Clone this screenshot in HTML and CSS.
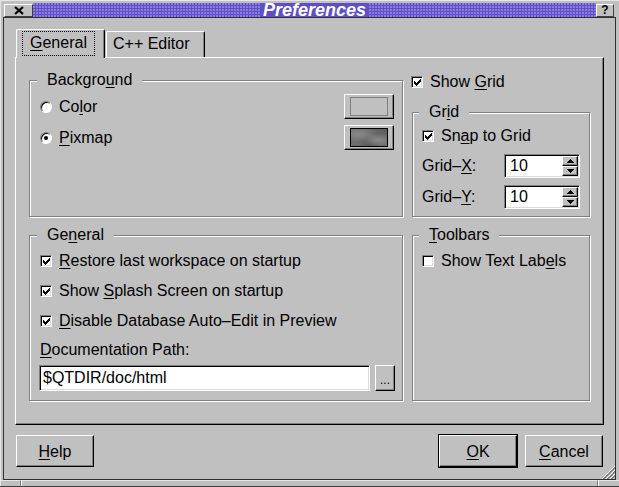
FILE: index.html
```html
<!DOCTYPE html>
<html>
<head>
<meta charset="utf-8">
<title>Preferences</title>
<link rel="stylesheet" href="styles.css">
</head>
<body>
<div class="window">
  <div class="titlebar">
    <div class="tb-btn tb-close">
      <svg width="10" height="9" viewBox="0 0 10 9"><path d="M1 1 L9 8 M9 1 L1 8" stroke="#000" stroke-width="2.3"/></svg>
    </div>
    <div class="tb-title"><span class="tb-text">Preferences</span></div>
    <div class="tb-btn tb-help">?</div>
  </div>

  <div class="client">
    <div class="tabs">
      <div class="tab tab-active"><span class="focus"><u>G</u>eneral</span></div>
      <div class="tab tab-normal">C++ Editor</div>
    </div>

    <div class="pane">
      <div class="group g-bg">
        <div class="group-title">Backgro<u>u</u>nd</div>
        <div class="bg-body">
          <div class="bg-radios">
            <div class="opt"><span class="radio"></span><span>Co<u>l</u>or</span></div>
            <div class="opt"><span class="radio on"></span><span><u>P</u>ixmap</span></div>
          </div>
          <div class="bg-btns">
            <div class="btn swatch"><span class="sw sw-color"></span></div>
            <div class="btn swatch"><span class="sw sw-pix"></span></div>
          </div>
        </div>
      </div>

      <div class="col-right">
        <div class="opt show-grid"><span class="cb"><svg width="10" height="10" viewBox="0 0 10 10"><path d="M2 4h1v3H2zM3 5h1v3H3zM4 6h1v3H4zM5 5h1v3H5zM6 4h1v3H6zM7 3h1v3H7zM8 2h1v3H8z" fill="#000"/></svg></span><span>Show <u>G</u>rid</span></div>
        <div class="group g-grid">
          <div class="group-title">Gr<u>i</u>d</div>
          <div class="opt snap"><span class="cb"><svg width="10" height="10" viewBox="0 0 10 10"><path d="M2 4h1v3H2zM3 5h1v3H3zM4 6h1v3H4zM5 5h1v3H5zM6 4h1v3H6zM7 3h1v3H7zM8 2h1v3H8z" fill="#000"/></svg></span><span>Sn<u>a</u>p to Grid</span></div>
          <div class="spin-row first">
            <span>Grid–<u>X</u>:</span>
            <div class="spin">
              <span class="spin-val">10</span>
              <div class="spin-btns">
                <div class="sb"><svg width="7" height="4" viewBox="0 0 7 4"><path d="M3 0h1v1H3zM2 1h3v1H2zM1 2h5v1H1zM0 3h7v1H0z" fill="#000"/></svg></div>
                <div class="sb"><svg width="7" height="4" viewBox="0 0 7 4"><path d="M0 0h7v1H0zM1 1h5v1H1zM2 2h3v1H2zM3 3h1v1H3z" fill="#000"/></svg></div>
              </div>
            </div>
          </div>
          <div class="spin-row">
            <span>Grid–<u>Y</u>:</span>
            <div class="spin">
              <span class="spin-val">10</span>
              <div class="spin-btns">
                <div class="sb"><svg width="7" height="4" viewBox="0 0 7 4"><path d="M3 0h1v1H3zM2 1h3v1H2zM1 2h5v1H1zM0 3h7v1H0z" fill="#000"/></svg></div>
                <div class="sb"><svg width="7" height="4" viewBox="0 0 7 4"><path d="M0 0h7v1H0zM1 1h5v1H1zM2 2h3v1H2zM3 3h1v1H3z" fill="#000"/></svg></div>
              </div>
            </div>
          </div>
        </div>
      </div>

      <div class="group g-gen">
        <div class="group-title">Ge<u>n</u>eral</div>
        <div class="gen-opts">
          <div class="opt"><span class="cb"><svg width="10" height="10" viewBox="0 0 10 10"><path d="M2 4h1v3H2zM3 5h1v3H3zM4 6h1v3H4zM5 5h1v3H5zM6 4h1v3H6zM7 3h1v3H7zM8 2h1v3H8z" fill="#000"/></svg></span><span><u>R</u>estore last workspace on startup</span></div>
          <div class="opt"><span class="cb"><svg width="10" height="10" viewBox="0 0 10 10"><path d="M2 4h1v3H2zM3 5h1v3H3zM4 6h1v3H4zM5 5h1v3H5zM6 4h1v3H6zM7 3h1v3H7zM8 2h1v3H8z" fill="#000"/></svg></span><span>Show <u>S</u>plash Screen on startup</span></div>
          <div class="opt"><span class="cb"><svg width="10" height="10" viewBox="0 0 10 10"><path d="M2 4h1v3H2zM3 5h1v3H3zM4 6h1v3H4zM5 5h1v3H5zM6 4h1v3H6zM7 3h1v3H7zM8 2h1v3H8z" fill="#000"/></svg></span><span><u>D</u>isable Database Auto–Edit in Preview</span></div>
        </div>
        <div class="doc-label"><u>D</u>ocumentation Path:</div>
        <div class="field-row">
          <div class="field"><span class="field-text">$QTDIR/doc/html</span></div>
          <div class="btn dots-btn">...</div>
        </div>
      </div>

      <div class="group g-tool">
        <div class="group-title"><u>T</u>oolbars</div>
        <div class="opt"><span class="cb"></span><span>Show Text Lab<u>e</u>ls</span></div>
      </div>
    </div>

    <div class="actions">
      <div class="btn pbtn"><span><u>H</u>elp</span></div>
      <div class="spacer"></div>
      <div class="default"><div class="btn pbtn"><span><u>O</u>K</span></div></div>
      <div class="btn pbtn"><span><u>C</u>ancel</span></div>
    </div>

    <svg class="grip" width="14" height="14" viewBox="0 0 14 14">
      <path d="M1 14 L14 1" stroke="#fff" stroke-width="1"/>
      <path d="M2 14 L14 2 M3 14 L14 3" stroke="#808080" stroke-width="1"/>
      <path d="M5 14 L14 5" stroke="#fff" stroke-width="1"/>
      <path d="M6 14 L14 6 M7 14 L14 7" stroke="#808080" stroke-width="1"/>
      <path d="M9 14 L14 9" stroke="#fff" stroke-width="1"/>
      <path d="M10 14 L14 10 M11 14 L14 11" stroke="#808080" stroke-width="1"/>
    </svg>
  </div>

  <div class="bottom-frame">
    <div class="bf-seg bf-left"></div>
    <div class="bf-seg bf-mid"></div>
    <div class="bf-seg bf-right"></div>
  </div>
</div>
</body>
</html>
```

FILE: styles.css
```css
* { box-sizing: border-box; }
html, body { margin: 0; padding: 0; }
body {
  font: 16px/18px "Liberation Sans", Arial, Helvetica, sans-serif;
  color: #000;
  background: #c0c0c0;
}
u { text-decoration: underline; text-decoration-thickness: 1px; text-underline-offset: 2px; }

.window {
  width: 619px;
  height: 487px;
  background: #c0c0c0;
  padding: 3px 3px 0 3px;
  display: flex;
  flex-direction: column;
  box-shadow: inset 1px 1px 0 #e6e6e6;
}

/* title bar */
.titlebar {
  height: 14px;
  margin: 0 2px 0 1px;
  display: flex;
  flex: none;
}
.tb-btn {
  background: #c0c0c0;
  border: 1px solid;
  border-color: #fff #404040 #404040 #fff;
  height: 13px;
  margin-top: 1px;
  display: flex;
  align-items: center;
  justify-content: center;
  flex: none;
}
.tb-close { width: 29px; }
.tb-help {
  width: 18px;
  font: bold 12px/11px "Liberation Sans", Arial, sans-serif;
}
.tb-title {
  flex: 1;
  background-color: #5e4fc4;
  background-image: radial-gradient(circle at 1px 1px, #8a7ee2 0.7px, transparent 1.1px);
  background-size: 3px 3px;
  text-align: center;
  color: #fff;
  font: italic bold 18px/14px "Liberation Sans", Arial, sans-serif;
}
.tb-text {
  background: #5e4fc4;
  padding: 0 3px;
  display: inline-block;
  height: 14px;
}

/* client */
.client {
  flex: none;
  height: 463px;
  border: 1px solid #303030;
  padding-top: 11px;
  display: flex;
  flex-direction: column;
  position: relative;
}

.tabs {
  display: flex;
  align-items: flex-end;
  height: 29px;
  margin: 0 0 -1px 12px;
  z-index: 1;
  flex: none;
}
.tab {
  background: #c0c0c0;
  border-top: 1px solid #fff;
  border-left: 1px solid #fff;
  border-right: 1px solid #000;
  box-shadow: inset -1px 0 0 #808080;
  border-radius: 2px 2px 0 0;
  white-space: nowrap;
}
.tab-active {
  width: 89px;
  height: 29px;
  padding: 1px 0 0 5px;
}
.tab-normal {
  width: 99px;
  height: 26px;
  margin: 0 0 1px 1px;
  padding: 3px 0 0 6px;
}
.focus {
  display: inline-block;
  border: 1px dotted #000;
  padding: 2px 7px 3px 7px;
}

.pane {
  flex: none;
  margin: 0 11px;
  height: 368px;
  border: 1px solid;
  border-color: #fff #000 #000 #fff;
  box-shadow: inset -1px -1px 0 #808080;
  display: grid;
  grid-template-columns: 374px 178px;
  grid-template-rows: 144px 166px;
  column-gap: 9px;
  row-gap: 18px;
  padding: 15px 13px 0 13px;
  align-items: start;
}

/* group boxes */
.group {
  border: 1px solid #808080;
  box-shadow: inset 1px 1px 0 #fff, 1px 1px 0 #fff;
}
.group-title {
  margin: -10px 0 0 -3px;
  padding: 0 10px;
  background: #c0c0c0;
  width: max-content;
  height: 18px;
  white-space: nowrap;
}

.opt {
  display: flex;
  align-items: center;
  white-space: nowrap;
  height: 18px;
}

.radio {
  width: 12px;
  height: 12px;
  flex: none;
  border-radius: 50%;
  border: 1px solid;
  border-color: #808080 #fff #fff #808080;
  background: #fff;
  box-shadow: inset 1px 1px 0 #000;
  margin-right: 7px;
  display: flex;
  align-items: center;
  justify-content: center;
}
.radio.on::after {
  content: "";
  width: 4px;
  height: 4px;
  border-radius: 50%;
  background: #000;
}

.cb {
  width: 12px;
  height: 12px;
  flex: none;
  border: 1px solid;
  border-color: #808080 #fff #fff #808080;
  box-shadow: inset 1px 1px 0 #000, inset -1px -1px 0 #dcdcdc;
  background: #fff;
  margin-right: 7px;
}
.cb svg { display: block; }

.btn {
  background: #c0c0c0;
  border: 1px solid;
  border-color: #fff #000 #000 #fff;
  box-shadow: inset -1px -1px 0 #808080;
  display: flex;
  align-items: center;
  justify-content: center;
  flex: none;
}

/* Background group */
.g-bg {
  margin-top: 7px;
  height: 137px;
  padding: 0 8px 0 10px;
}
.bg-body {
  display: flex;
  justify-content: space-between;
  margin-top: 5px;
}
.bg-radios, .bg-btns {
  display: flex;
  flex-direction: column;
  gap: 6px;
}
.bg-radios .opt { height: 25px; }
.swatch { width: 50px; height: 25px; }
.sw {
  display: block;
  width: 38px;
  height: 19px;
}
.sw-color { border: 1px solid #808080; }
.sw-pix {
  border: 1px solid #000;
  background-color: #6e6e6e;
  background-image:
    radial-gradient(ellipse at 20% 30%, #8a8a8a 0, transparent 45%),
    radial-gradient(ellipse at 75% 65%, #888 0, transparent 40%),
    radial-gradient(ellipse at 50% 90%, #5c5c5c 0, transparent 45%),
    radial-gradient(ellipse at 90% 15%, #5e5e5e 0, transparent 40%);
}

/* right column */
.col-right {
  display: flex;
  flex-direction: column;
}
.show-grid { margin-left: -1px; }
.g-grid {
  margin-top: 21px;
  height: 105px;
  padding: 0 9px 0 9px;
}
.snap { margin-top: 6px; }
.spin-row {
  display: flex;
  justify-content: space-between;
  align-items: center;
  margin-top: 7px;
  white-space: nowrap;
}
.spin-row.first { margin-top: 9px; }
.spin {
  width: 76px;
  height: 24px;
  border: 1px solid;
  border-color: #808080 #fff #fff #808080;
  box-shadow: inset 1px 1px 0 #000, inset -1px -1px 0 #dcdcdc;
  background: #fff;
  padding: 1px;
  display: flex;
}
.spin-val {
  flex: 1;
  padding-left: 4px;
  line-height: 20px;
}
.spin-btns {
  width: 16px;
  display: flex;
  flex-direction: column;
}
.sb {
  flex: 1;
  background: #c0c0c0;
  border: 1px solid;
  border-color: #fff #000 #000 #fff;
  box-shadow: inset -1px -1px 0 #808080;
  display: flex;
  align-items: center;
  justify-content: center;
}
.sb svg { display: block; }

/* General group */
.g-gen {
  height: 166px;
  padding: 0 7px 0 10px;
}
.gen-opts {
  display: flex;
  flex-direction: column;
  gap: 12px;
  margin-top: 8px;
}
.doc-label { margin-top: 11px; white-space: nowrap; }
.field-row {
  display: flex;
  gap: 5px;
  height: 26px;
  margin: 6px 0 0 -1px;
}
.field {
  flex: 1;
  border: 1px solid;
  border-color: #808080 #fff #fff #808080;
  box-shadow: inset 1px 1px 0 #000, inset -1px -1px 0 #dcdcdc;
  background: #fff;
  padding: 1px 1px 1px 3px;
  line-height: 22px;
  white-space: nowrap;
}
.dots-btn {
  width: 20px;
  height: 26px;
  font-size: 12px;
  padding-top: 4px;
}

/* Toolbars */
.g-tool {
  height: 166px;
  padding: 0 9px;
}
.g-tool .opt { margin-top: 8px; }

/* bottom buttons */
.actions {
  flex: none;
  display: flex;
  align-items: center;
  height: 34px;
  margin-top: 9px;
  padding: 0 12px;
}
.spacer { flex: 1; }
.pbtn {
  width: 78px;
  height: 32px;
  padding-top: 2px;
}
.default {
  border: 1px solid #000;
  margin-right: 7px;
}

.grip {
  position: absolute;
  right: 0;
  bottom: 0;
}

/* window manager bottom frame */
.bottom-frame {
  flex: none;
  height: 7px;
  margin: 0 -3px;
  display: flex;
  border-bottom: 1px solid #404040;
}
.bf-seg {
  height: 100%;
  border-top: 1px solid #e6e6e6;
}
.bf-left { width: 21px; border-right: 1px solid #808080; }
.bf-mid { flex: 1; border-left: 1px solid #fff; border-right: 1px solid #808080; }
.bf-right { width: 21px; border-left: 1px solid #fff; }
```
